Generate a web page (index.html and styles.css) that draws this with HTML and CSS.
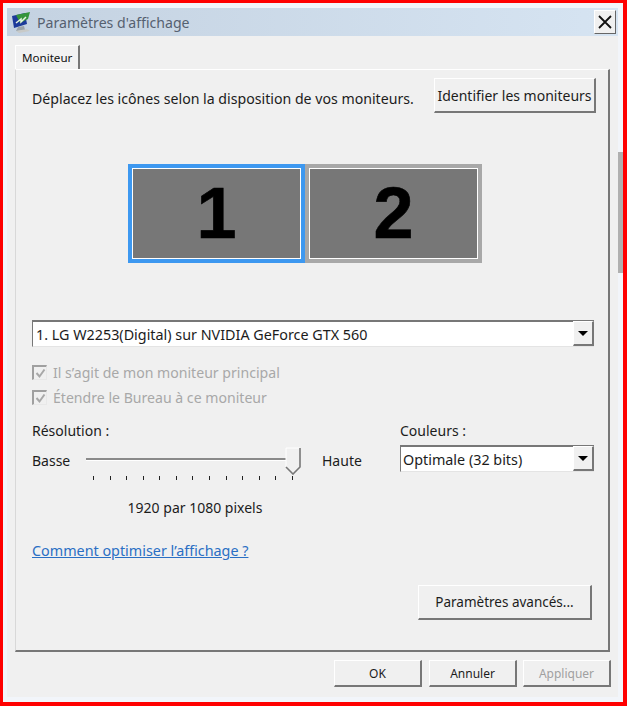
FILE: index.html
```html
<!DOCTYPE html>
<html lang="fr">
<head>
    <meta charset="UTF-8">
    <meta name="viewport" content="width=device-width, initial-scale=1.0">
    <title>Paramètres d'affichage</title>
    <link rel="stylesheet" href="styles.css">
</head>
<body>

<div class="frame">
<div class="window">

    <!-- Title bar -->
    <div class="titlebar">
        <svg class="app-icon" width="19" height="21" viewBox="0 0 19 21">
            <polygon points="0,4 13,1 15,12 2,16" fill="#1c3a9a"/>
            <polygon points="4,3 18,0 16,7 8,11" fill="#35953a"/>
            <polyline points="4,11 9,7 9,10 14,5" fill="none" stroke="#e8f4e0" stroke-width="1.5"/>
            <polygon points="6,15 12,14 13,18 4,19" fill="#9aa2a8"/>
            <polygon points="4,19 15,17 18,19 7,21" fill="#c8cac8"/>
        </svg>
        <span class="title-text">Paramètres d'affichage</span>
        <div class="close-btn">
            <svg width="14" height="14" viewBox="0 0 14 14">
                <path d="M1 1 L13 13 M13 1 L1 13" stroke="#111" stroke-width="1.8" fill="none"/>
            </svg>
        </div>
    </div>

    <div class="content">
        <div class="tab">Moniteur</div>

        <div class="panel">
            <div class="top-row">
                <span class="intro">Déplacez les icônes selon la disposition de vos moniteurs.</span>
                <button class="btn btn-identify">Identifier les moniteurs</button>
            </div>

            <!-- Monitor arrangement -->
            <div class="monitors">
                <div class="monitor selected"><span>1</span></div>
                <div class="monitor"><span>2</span></div>
            </div>

            <div class="select select-monitor">
                <span class="select-value">1. LG W2253(Digital) sur NVIDIA GeForce GTX 560</span>
                <span class="select-arrow"></span>
            </div>

            <div class="check-row">
                <span class="checkbox"><svg width="11" height="11" viewBox="0 0 11 11"><path d="M1.5 5 L4.5 8.5 L9.5 1.5" fill="none" stroke="#a8a8a8" stroke-width="2"/></svg></span>
                <span>Il s’agit de mon moniteur principal</span>
            </div>
            <div class="check-row">
                <span class="checkbox"><svg width="11" height="11" viewBox="0 0 11 11"><path d="M1.5 5 L4.5 8.5 L9.5 1.5" fill="none" stroke="#a8a8a8" stroke-width="2"/></svg></span>
                <span>Étendre le Bureau à ce moniteur</span>
            </div>

            <div class="settings">
                <div class="resolution">
                    <div class="label">Résolution :</div>
                    <div class="slider-row">
                        <span class="slider-end">Basse</span>
                        <div class="slider">
                            <div class="track"></div>
                            <div class="ticks">
                                <i></i><i></i><i></i><i></i><i></i><i></i><i></i><i></i><i></i><i></i><i></i><i></i><i></i>
                            </div>
                            <svg class="thumb" width="16" height="28" viewBox="0 0 16 28">
                                <path d="M1 1 H15 V20 L8 27 L1 20 Z" fill="#f0f0f0"/>
                                <path d="M1 20 V1 H15" fill="none" stroke="#fff"/>
                                <path d="M15 1 V20 L8 27 L1 20" fill="none" stroke="#777" stroke-width="1.6"/>
                            </svg>
                        </div>
                        <span class="slider-end slider-high">Haute</span>
                    </div>
                    <div class="res-value">1920 par 1080 pixels</div>
                </div>
                <div class="colors">
                    <div class="label">Couleurs :</div>
                    <div class="select">
                        <span class="select-value">Optimale (32 bits)</span>
                        <span class="select-arrow"></span>
                    </div>
                </div>
            </div>

            <a class="help-link" href="#">Comment optimiser l’affichage ?</a>

            <div class="advanced-row">
                <button class="btn btn-advanced">Paramètres avancés...</button>
            </div>
        </div>

        <div class="footer">
            <button class="btn btn-footer">OK</button>
            <button class="btn btn-footer">Annuler</button>
            <button class="btn btn-footer disabled">Appliquer</button>
        </div>
    </div>

    <div class="edge-strip"></div>

</div>
</div>

</body>
</html>
```

FILE: styles.css
```css
* {
    box-sizing: border-box;
}
html, body {
    margin: 0;
    padding: 0;
    overflow: hidden;
}
body {
    font-family: 'Noto Sans', 'Open Sans', sans-serif;
    font-size: 14px;
    color: #1c1c1c;
    background-color: #f00;
}
.frame {
    width: 627px;
    height: 706px;
    border: solid #f00;
    border-width: 3px 4px 4px 3px;
}
.window {
    height: 100%;
    position: relative;
    background-color: #f2f5fa;
    padding: 5px 5px 5px 4px;
    display: flex;
    flex-direction: column;
}
/* grey mark on the right edge of the window */
.edge-strip {
    position: absolute;
    right: 0;
    top: 149px;
    width: 5px;
    height: 121px;
    background-color: #b0b0b0;
}

/* title bar */
.titlebar {
    height: 28px;
    flex: none;
    display: flex;
    align-items: center;
    padding: 0 2px 0 5px;
    background: linear-gradient(to right, #c4d2e1, #d6e4f2);
}
.app-icon {
    flex: none;
}
.title-text {
    margin-left: 6px;
    font-size: 14.1px;
    color: #566170;
}
.close-btn {
    width: 22px;
    height: 24px;
    margin-left: auto;
    display: flex;
    align-items: center;
    justify-content: center;
    background-color: #f0f0f0;
    border: 1px solid;
    border-color: #fff #666 #666 #fff;
}

/* main area */
.content {
    flex: 1;
    background-color: #f0f0f0;
    padding: 9px 0 0 8px;
    display: flex;
    flex-direction: column;
}
.tab {
    width: 65px;
    height: 24px;
    font-size: 11.6px;
    line-height: 23px;
    color: #111;
    padding-left: 6px;
    border-top: 1px solid #fff;
    border-left: 1px solid #fff;
    border-right: 2px solid #777;
    background-color: #f2f2f2;
}
.panel {
    width: 595px;
    height: 583px;
    flex: none;
    border: solid;
    border-width: 1px 2px 2px 1px;
    border-color: #fff #777 #777 #d8d8d8;
    padding: 8px 14px 0 16px;
}
.top-row {
    display: flex;
    justify-content: space-between;
    height: 35px;
    margin-right: -2px;
}
.intro {
    padding-top: 11px;
    font-size: 14.15px;
}

/* buttons */
.btn {
    font-family: inherit;
    font-size: 14px;
    color: #1c1c1c;
    background-color: #f0f0f0;
    border: solid;
    border-width: 1px 2px 2px 1px;
    border-color: #fff #777 #777 #fff;
    padding: 0;
}
.btn-identify {
    width: 162px;
    height: 35px;
}
.btn-advanced {
    width: 174px;
    height: 35px;
    font-size: 13.5px;
}
.btn-footer {
    width: 88px;
    height: 27px;
    font-size: 12px;
}
.btn-footer:first-child {
    margin-right: 1px;
}
.btn.disabled {
    color: #a0a0a0;
}

/* monitors */
.monitors {
    display: flex;
    margin: 51px 0 0 96px;
}
.monitor {
    width: 177px;
    height: 99px;
    border: 4px solid #a8a8a8;
    background-color: #777;
    outline: 1px solid #fff;
    outline-offset: -5px;
    display: flex;
    align-items: center;
    justify-content: center;
}
.monitor.selected {
    border-color: #3d98f0;
}
.monitor span {
    font-family: 'Liberation Sans', Arial, sans-serif;
    font-size: 72px;
    font-weight: bold;
    color: #000;
    line-height: 1;
    margin-bottom: 2px;
    -webkit-text-stroke: 0.6px #000;
}

/* combo boxes */
.select {
    height: 27px;
    display: flex;
    align-items: center;
    justify-content: space-between;
    background-color: #fff;
    border: solid;
    border-width: 2px 0 1px 1px;
    border-color: #777 #fff #e4e4e4 #777;
}
.select-monitor {
    margin-top: 57px;
}
.select-value {
    padding-left: 2px;
    font-size: 14.35px;
    color: #1c1c1c;
}
.select-monitor .select-value {
    padding-left: 3px;
}
.select-arrow {
    width: 21px;
    height: 25px;
    flex: none;
    margin-top: -1px;
    position: relative;
    background-color: #f0f0f0;
    border: solid;
    border-width: 1px 2px 2px 1px;
    border-color: #fff #777 #777 #fff;
}
.select-arrow::after {
    content: "";
    position: absolute;
    left: 4px;
    top: 9px;
    border-left: 5px solid transparent;
    border-right: 5px solid transparent;
    border-top: 5px solid #000;
}

/* checkboxes */
.check-row {
    height: 15px;
    margin-top: 10px;
    display: flex;
    align-items: center;
    gap: 6px;
    font-size: 14.1px;
    color: #a8a8a8;
}
.select-monitor + .check-row {
    margin-top: 18px;
}
.checkbox {
    width: 15px;
    height: 15px;
    flex: none;
    display: flex;
    align-items: center;
    justify-content: center;
    background-color: #f0f0f0;
    border: 1px solid;
    border-width: 2px 1px 1px 2px;
    border-color: #a0a0a0 #e8e8e8 #e8e8e8 #a0a0a0;
}

/* resolution and colours */
.settings {
    display: flex;
    margin-top: 15px;
}
.resolution {
    width: 368px;
}
.colors {
    width: 194px;
}
.label {
    height: 20px;
    line-height: 22px;
    margin-bottom: 5px;
}
.slider-row {
    display: flex;
    height: 36px;
}
.slider-end {
    width: 54px;
    flex: none;
    padding-top: 6px;
}
.slider-high {
    margin-left: 22px;
}
.slider {
    width: 214px;
    flex: none;
    position: relative;
}
.track {
    width: 204px;
    height: 3px;
    margin-top: 13px;
    background-color: #8a8a8a;
    border-bottom: 1px solid #fff;
}
.ticks {
    display: flex;
    justify-content: space-between;
    margin-top: 15px;
    padding: 0 7px;
}
.ticks i {
    width: 1px;
    height: 4px;
    background-color: #222;
}
.thumb {
    position: absolute;
    left: 199px;
    top: 2px;
}
.res-value {
    width: 326px;
    margin-top: 17px;
    height: 20px;
    line-height: 20px;
    text-align: center;
}
.help-link {
    display: block;
    width: max-content;
    margin-top: 23px;
    height: 20px;
    line-height: 20px;
    font-size: 14.35px;
    color: #2a6fc4;
    text-decoration: underline;
}
.advanced-row {
    display: flex;
    justify-content: flex-end;
    margin: 24px 2px 0 0;
}

/* bottom buttons */
.footer {
    display: flex;
    justify-content: flex-end;
    gap: 6px;
    margin-top: 8px;
    padding-right: 7px;
}
```
